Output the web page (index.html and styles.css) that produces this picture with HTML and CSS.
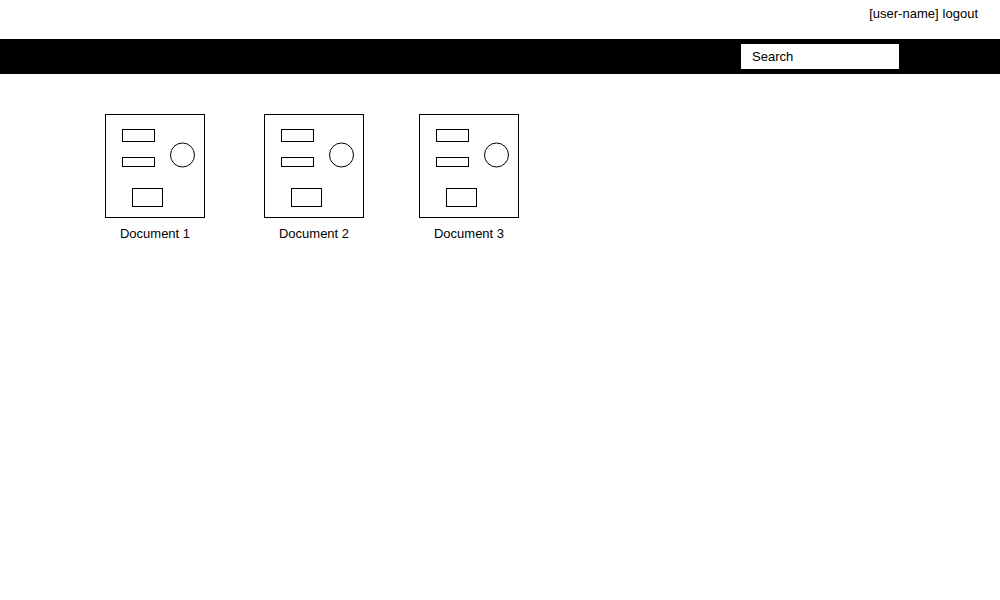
FILE: index.html
```html
<!DOCTYPE html>
<html>
<head>
<meta charset="utf-8">
<link rel="stylesheet" href="styles.css">
</head>
<body>
<header class="top">
  <span class="user">[user-name]</span>
  <span class="logout">logout</span>
</header>
<nav class="bar">
  <div class="search">Search</div>
</nav>
<main class="docs">
  <div class="doc">
    <svg class="thumb" width="100" height="105" viewBox="0 0 100 105">
      <rect x="0.5" y="0.5" width="99" height="103" fill="#fff" stroke="#000"/>
      <rect x="17.5" y="15.5" width="32" height="12" fill="none" stroke="#000"/>
      <rect x="17.5" y="43.5" width="32" height="9" fill="none" stroke="#000"/>
      <circle cx="77.5" cy="41" r="12" fill="none" stroke="#000"/>
      <rect x="27.5" y="74.5" width="30" height="18" fill="none" stroke="#000"/>
    </svg>
    <div class="label">Document 1</div>
  </div>
  <div class="doc">
    <svg class="thumb" width="100" height="105" viewBox="0 0 100 105">
      <rect x="0.5" y="0.5" width="99" height="103" fill="#fff" stroke="#000"/>
      <rect x="17.5" y="15.5" width="32" height="12" fill="none" stroke="#000"/>
      <rect x="17.5" y="43.5" width="32" height="9" fill="none" stroke="#000"/>
      <circle cx="77.5" cy="41" r="12" fill="none" stroke="#000"/>
      <rect x="27.5" y="74.5" width="30" height="18" fill="none" stroke="#000"/>
    </svg>
    <div class="label">Document 2</div>
  </div>
  <div class="doc">
    <svg class="thumb" width="100" height="105" viewBox="0 0 100 105">
      <rect x="0.5" y="0.5" width="99" height="103" fill="#fff" stroke="#000"/>
      <rect x="17.5" y="15.5" width="32" height="12" fill="none" stroke="#000"/>
      <rect x="17.5" y="43.5" width="32" height="9" fill="none" stroke="#000"/>
      <circle cx="77.5" cy="41" r="12" fill="none" stroke="#000"/>
      <rect x="27.5" y="74.5" width="30" height="18" fill="none" stroke="#000"/>
    </svg>
    <div class="label">Document 3</div>
  </div>
</main>
</body>
</html>
```
FILE: styles.css
```css
html, body {
  margin: 0;
  padding: 0;
  background: #fff;
}
body {
  font-family: "Liberation Sans", Arial, sans-serif;
  font-size: 13px;
  color: #000;
  width: 1000px;
  height: 600px;
}
.top {
  height: 39px;
  display: flex;
  justify-content: flex-end;
  align-items: flex-start;
  padding: 6px 22px 0 0;
  box-sizing: border-box;
  gap: 4px;
}
.bar {
  height: 35px;
  background: #000;
  display: flex;
  align-items: flex-start;
  padding: 5px 0 0 741px;
  box-sizing: border-box;
}
.search {
  width: 158px;
  height: 25px;
  background: #fff;
  box-sizing: border-box;
  padding: 5px 0 0 11px;
  line-height: 16px;
}
.docs {
  display: flex;
  padding: 40px 0 0 105px;
  gap: 55px;
}
.doc {
  width: 100px;
  display: flex;
  flex-direction: column;
  align-items: center;
}
.doc:first-child {
  margin-right: 4px;
}
.thumb {
  display: block;
}
.label {
  margin-top: 7px;
  line-height: 16px;
  white-space: nowrap;
}
```
